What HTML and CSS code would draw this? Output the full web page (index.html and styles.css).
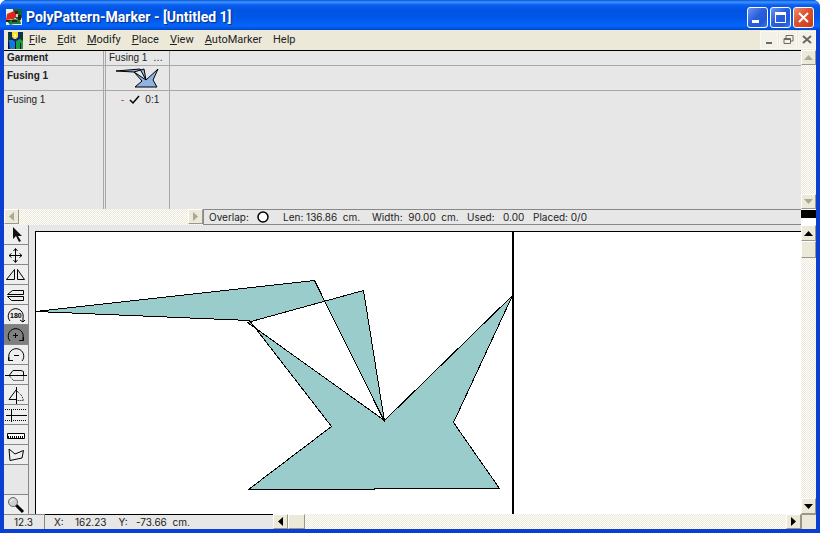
FILE: index.html
```html
<!DOCTYPE html>
<html lang="en">
<head>
<meta charset="utf-8">
<title>PolyPattern-Marker - [Untitled 1]</title>
<link rel="stylesheet" href="styles.css">
</head>
<body>
<div class="window">
  <header class="titlebar">
    <svg class="app-icon" width="16" height="16" viewBox="0 0 16 16" aria-hidden="true">
      <rect width="16" height="16" fill="#e8efe6"/>
      <path d="M7 0h9v9l-4 2-4-3z" fill="#16603a"/>
      <path d="M1 5l7-3 3 4-3 4-8 1z" fill="#e0261c"/>
      <path d="M9 2h3v3H9zM12 6h3v5h-3z" fill="#2c2018"/>
      <path d="M1 12l7-2 6 1 1 4H8l-4 1z" fill="#1d7a34"/>
      <path d="M0 11h5l-2 2H0zM6 11h5v2H6z" fill="#222"/>
      <path d="M10 5h2v3h-2z" fill="#f0c8a8"/>
    </svg>
    <h1 class="title">PolyPattern-Marker - [Untitled 1]</h1>
    <div class="caption-buttons">
      <button class="caption" aria-label="Minimize"><svg width="19" height="19"><path d="M4 12h7v3H4z" fill="#fff"/></svg></button>
      <button class="caption" aria-label="Maximize"><svg width="19" height="19"><path d="M4 4h11v11H4zM5 7v7h9V7z" fill="#fff" fill-rule="evenodd"/></svg></button>
      <button class="caption close" aria-label="Close"><svg width="19" height="19"><path d="M5 5l9 9M14 5l-9 9" stroke="#fff" stroke-width="2"/></svg></button>
    </div>
  </header>

  <div class="client">
    <nav class="menubar">
      <svg class="doc-icon" width="15" height="17" viewBox="0 0 15 17" aria-hidden="true">
        <rect width="15" height="17" fill="#10208c"/>
        <path d="M0 1h3v8H0zM12 1h3v7h-3z" fill="#123c20"/>
        <path d="M4 0h6v5L8 7H6L4 5z" fill="#f6e21c"/>
        <path d="M6 2h2v3H6z" fill="#fff6a0"/>
        <path d="M1 8h4l3 3v6H2z" fill="#1579d0"/>
        <path d="M8 9l4-2 3 2v8H8z" fill="#18a040"/>
        <path d="M0 10h1v7H0zM7 10h1v7H7zM12 11h1v6h-1z" fill="#061040"/>
      </svg>
      <a class="menu" href="#"><u>F</u>ile</a>
      <a class="menu" href="#"><u>E</u>dit</a>
      <a class="menu" href="#"><u>M</u>odify</a>
      <a class="menu" href="#"><u>P</u>lace</a>
      <a class="menu" href="#"><u>V</u>iew</a>
      <a class="menu" href="#"><u>A</u>utoMarker</a>
      <a class="menu" href="#">Help</a>
      <div class="doc-buttons">
        <button class="doc-button" aria-label="Minimize document"><svg width="16" height="16"><path d="M5 10h6v2H5z" fill="#6b6a62"/></svg></button>
        <button class="doc-button" aria-label="Restore document"><svg width="16" height="16"><path d="M6 6V3.500h7V9h-2M4 6.500h6.500v5H4zM4 7.500h6" fill="none" stroke="#6b6a62"/></svg></button>
        <button class="doc-button" aria-label="Close document"><svg width="16" height="16"><path d="M4 4l8 7M12 4l-8 7" stroke="#6b6a62" stroke-width="2"/></svg></button>
      </div>
    </nav>

    <section class="garments">
      <div class="garment-list">
        <table class="garment-table">
          <thead>
            <tr><th class="name">Garment</th><th class="gutter"></th><th class="piece light">Fusing 1 &nbsp;…</th><th class="rest"></th></tr>
          </thead>
          <tbody>
            <tr class="summary">
              <th class="name">Fusing 1</th><td class="gutter"></td>
              <td class="piece">
                <svg class="thumb" width="44" height="20" viewBox="0 0 44 20" aria-hidden="true">
                  <path d="M1 3L25 1L31 12L29 1L19 4L31 12L43 1L38 12L42 19H20L27 13L19 4Z" fill="#8fb4e3" fill-rule="evenodd" stroke="#000"/>
                </svg>
              </td><td class="rest"></td>
            </tr>
            <tr class="entry">
              <td class="name">Fusing 1</td><td class="gutter"></td>
              <td class="piece">
                <span class="count"><span class="dash">-</span><svg width="11" height="10" aria-hidden="true"><path d="M1 5l3 3L10 1" fill="none" stroke="#000" stroke-width="1.500"/></svg><span>0:1</span></span>
              </td><td class="rest"></td>
            </tr>
          </tbody>
        </table>
      </div>
      <div class="scroll vertical">
        <button class="arrow" aria-label="Scroll list up"><svg width="9" height="5"><path d="M0 5L4.500 0L9 5z"/></svg></button>
        <button class="arrow last" aria-label="Scroll list down"><svg width="9" height="5"><path d="M0 0L4.500 5L9 0z"/></svg></button>
      </div>
    </section>

    <div class="infobar">
      <div class="scroll horizontal">
        <button class="arrow" aria-label="Scroll list left"><svg width="5" height="9"><path d="M5 0L0 4.500L5 9z"/></svg></button>
        <button class="arrow last" aria-label="Scroll list right"><svg width="5" height="9"><path d="M0 0L5 4.500L0 9z"/></svg></button>
      </div>
      <div class="info">
        <span class="overlap">Overlap: <svg width="12" height="12" aria-hidden="true"><circle cx="6" cy="6" r="5" fill="#fff" stroke="#000" stroke-width="1.500"/></svg></span>
        <span class="len">Len: 136.86 &nbsp;cm.</span>
        <span class="wid">Width: &nbsp;90.00 &nbsp;cm.</span>
        <span class="used">Used: &nbsp; 0.00</span>
        <span>Placed: 0/0</span>
      </div>
      <div class="splitter"></div>
    </div>

    <main class="workspace">
      <div class="tools">
        <button class="tool" aria-label="Select"><svg width="22" height="18"><path d="M8 1v12l3-3 3 6 2-1-3-5h4z" fill="#111"/></svg></button>
        <button class="tool" aria-label="Move"><svg width="22" height="18"><path d="M10.500 3v13M4 9.500h13M8.500 5l2-2.500 2 2.500M8.500 14l2 2.500 2-2.500M6.500 7.500l-2.500 2 2.500 2M14.500 7.500l2.500 2-2.500 2" fill="none" stroke="#000"/></svg></button>
        <button class="tool" aria-label="Flip horizontally"><svg width="22" height="18"><path d="M9.500 3.500v10h-8zM12.500 3.500v10h7z" fill="none" stroke="#000"/></svg></button>
        <button class="tool" aria-label="Flip vertically"><svg width="22" height="18"><path d="M18.500 4.500h-11l-5 4h16zM18.500 10.500h-16l4 4h12z" fill="none" stroke="#000"/></svg></button>
        <button class="tool" aria-label="Rotate 180 degrees"><svg width="22" height="18"><path d="M5 15a7.500 7.500 0 1 1 13-3v4m-3-2l3 2 2-2" fill="none" stroke="#000"/><text class="tool-text" x="5" y="12">180</text></svg></button>
        <button class="tool active" aria-label="Rotate clockwise"><svg width="22" height="18"><path d="M5 15a7.500 7.500 0 1 1 13-3v3m-4-.500h4.500V11M8 9.500h5M10.500 7v5" fill="none" stroke="#000"/></svg></button>
        <button class="tool" aria-label="Rotate counterclockwise"><svg width="22" height="18"><path d="M17 15a7.500 7.500 0 1 0-13-3v3m4-.500H3.500V11M9 9.500h5" fill="none" stroke="#000"/></svg></button>
        <button class="tool" aria-label="Fold horizontally"><svg width="22" height="18"><path d="M0 9.500h22M4.500 9L8 4.500h8l2.500 1V9" fill="none" stroke="#000"/><path d="M4.500 10l4 4.500h10V9" fill="none" stroke="#000" stroke-dasharray="1 1"/></svg></button>
        <button class="tool" aria-label="Fold vertically"><svg width="22" height="18"><path d="M11.500 1v17M11 4l-7 9.500h7" fill="none" stroke="#000"/><path d="M12 5l5 5 1.500 4.500H12" fill="none" stroke="#000" stroke-dasharray="1 1"/></svg></button>
        <button class="tool" aria-label="Guides"><svg width="22" height="18"><path d="M6.500 3v13M1 9.500h21" fill="none" stroke="#000"/><path d="M0 3.500h22M0 14.500h22" stroke="#000" stroke-dasharray="1 1"/></svg></button>
        <button class="tool" aria-label="Measure"><svg width="22" height="18"><path d="M2.500 7.500h17v5h-17z" fill="#fff" stroke="#000"/><path d="M3 11.500h16" stroke="#000" stroke-width="3" stroke-dasharray="1 1"/></svg></button>
        <button class="tool" aria-label="Polygon"><svg width="22" height="18"><path d="M4 3l6 5 8.500-3.500L17 12 5 14.500z" fill="none" stroke="#000"/></svg></button>
        <button class="tool zoom" aria-label="Zoom"><svg width="22" height="18"><path d="M11 9l7 7" stroke="#000" stroke-width="3"/><circle cx="8" cy="6" r="4.500" fill="#d0d0d0" stroke="#666"/><path d="M5.500 6a3 3 0 0 1 3-2.500" fill="none" stroke="#fff"/></svg></button>
      </div>
      <div class="canvas">
        <svg class="marker" width="100%" height="100%" role="img" aria-label="Marker layout">
          <path class="fabric" d="M0 79.500L278.500 48.500L348.500 189.500L327.500 58.500L211.500 90.500L348.500 188.500L476.500 63.500L417.500 190.500L463.500 256.500L338.500 256.500V257.500L212.500 257.500L295.500 194.500L213.500 88.500Z"/>
          <rect x="476" y="0" width="2" height="100%"/>
        </svg>
      </div>
      <div class="scroll vertical enabled">
        <button class="arrow" aria-label="Scroll up"><svg width="9" height="5"><path d="M0 5L4.500 0L9 5z"/></svg></button>
        <div class="thumb-box"></div>
        <button class="arrow last" aria-label="Scroll down"><svg width="9" height="5"><path d="M0 0L4.500 5L9 0z"/></svg></button>
      </div>
    </main>

    <footer class="statusbar">
      <div class="scale">12.3</div>
      <div class="position"><span>X: &nbsp; &nbsp;162.23</span><span>Y: &nbsp; -73.66 &nbsp;cm.</span></div>
      <div class="scroll horizontal enabled">
        <button class="arrow" aria-label="Scroll left"><svg width="5" height="9"><path d="M5 0L0 4.500L5 9z"/></svg></button>
        <div class="thumb-box"></div>
        <button class="arrow last" aria-label="Scroll right"><svg width="5" height="9"><path d="M0 0L5 4.500L0 9z"/></svg></button>
      </div>
      <div class="corner"></div>
    </footer>
  </div>
</div>
</body>
</html>
```

FILE: styles.css
```css
* {
  box-sizing: border-box;
}

body {
  margin: 0;
  background: #fff;
  color: #222;
  font: 10px/14px "Liberation Sans", Arial, sans-serif;
}

button {
  margin: 0;
  padding: 0;
  border: 0;
  font: inherit;
}

svg {
  display: block;
}

.window {
  display: flex;
  flex-direction: column;
  height: 100vh;
  padding: 0 4px 4px;
  border-radius: 7px 7px 0 0;
  background: #0a3fd2;
  overflow: hidden;
}

/* Title bar */
.titlebar {
  display: flex;
  align-items: center;
  height: 30px;
  margin: 0 -4px;
  padding: 4px 6px 0;
  background: linear-gradient(#0a50d8 0, #3d95ff 2px, #0a5ff0 5px, #0054e3 10px, #0057e8 18px, #0566fb 26px, #0047cc 30px);
}

.title {
  flex: 1;
  margin: 0 0 0 4px;
  color: #fff;
  font: bold 14px/20px Roboto, sans-serif;
  text-shadow: 1px 1px 1px #0a2c8c;
}

.caption-buttons {
  display: flex;
  gap: 2px;
}

.caption {
  width: 21px;
  height: 21px;
  border: 1px solid #fff;
  border-radius: 3px;
  background: linear-gradient(135deg, #6c96f2, #2a5fdc 45%, #2158d8 75%, #3b7bf0);
}

.close {
  background: linear-gradient(135deg, #ee8d70, #dc5130 45%, #cc3c14);
}

.client {
  display: flex;
  flex: 1;
  flex-direction: column;
  min-height: 0;
  background: #e7e7e7;
}

/* Menu */
.menubar {
  display: flex;
  flex: none;
  align-items: center;
  height: 20px;
  padding-left: 4px;
  background: #ece9d8;
  font: 11px/18px Roboto, sans-serif;
}

.doc-icon {
  margin-right: 6px;
}

.menu {
  margin-right: 11px;
  color: #222;
  text-decoration: none;
}

.doc-buttons {
  display: flex;
  gap: 3px;
  margin-left: auto;
  padding-right: 1px;
}

.doc-button {
  width: 16px;
  height: 16px;
  background: #f3f1e8;
  box-shadow: 0 0 0 1px #f9f8f2;
}

/* Garment list */
.garments {
  display: flex;
  flex: none;
  height: 159px;
}

.garment-list {
  flex: 1;
  border-top: 1px solid #000;
}

.garment-table {
  width: 100%;
  height: 100%;
  border-collapse: separate;
  border-spacing: 0;
  table-layout: fixed;
}

.garment-table th,
.garment-table td {
  padding: 0;
  border-bottom: 1px solid #a8a8a8;
  text-align: left;
  vertical-align: top;
}

.garment-table thead th {
  height: 15px;
}

.garment-table .summary > * {
  height: 25px;
}

.garment-table .entry > * {
  border-bottom: 0;
}

.garment-table .name {
  width: 100px;
  padding-left: 3px;
  border-right: 1px solid #a8a8a8;
}

.garment-table .summary .name {
  padding-top: 3px;
}

.garment-table .entry > * {
  padding-top: 2px;
}

.garment-table .gutter {
  width: 2px;
  border-right: 1px solid #a8a8a8;
}

.garment-table .piece {
  width: 64px;
  padding-left: 3px;
  border-right: 1px solid #a8a8a8;
  white-space: nowrap;
}

.light {
  font-weight: normal;
}

.thumb {
  margin: 2px 0 0 6px;
}

.count {
  display: flex;
  gap: 5px;
  align-items: center;
  padding-left: 12px;
}

.dash {
  color: #d03040;
}

/* Scroll bars */
.scroll {
  display: flex;
  background: repeating-conic-gradient(#fff 0 25%, #ece9d8 0 50%) 0 0 / 2px 2px;
}

.vertical {
  flex: none;
  flex-direction: column;
  width: 15px;
}

.arrow,
.thumb-box {
  display: grid;
  flex: none;
  place-items: center;
  width: 15px;
  height: 15px;
  border: 1px solid;
  border-color: #fff #99978a #99978a #fff;
  background: #ece9d8;
  fill: #aaa899;
}

.enabled .arrow {
  fill: #000;
}

.enabled .thumb-box {
  width: 17px;
}

.vertical.enabled .arrow {
  height: 16px;
}

.vertical.enabled .thumb-box {
  width: 15px;
  height: 17px;
}

.vertical .last {
  margin-top: auto;
}

.horizontal .last {
  margin-left: auto;
}

/* Information strip */
.infobar {
  display: flex;
  flex: none;
  height: 16px;
}

.infobar .scroll {
  width: 199px;
}

.info,
.statusbar {
  font-family: Inter, "Liberation Sans", sans-serif;
}

.info {
  display: flex;
  flex: 1;
  align-items: center;
  padding-left: 5px;
  border: 1px solid #888;
  border-right: 0;
  white-space: nowrap;
}

.overlap {
  display: flex;
  gap: 8px;
  align-items: center;
  width: 74px;
}

.len {
  width: 89px;
}

.wid {
  width: 95px;
}

.used {
  width: 66px;
}

.splitter {
  width: 15px;
  margin-bottom: 7px;
  border-top: 1px solid #fff;
  background: #000;
  box-shadow: 0 7px #fff;
}

/* Work area */
.workspace {
  display: flex;
  flex: 1;
  min-height: 0;
}

.tools {
  display: flex;
  flex: none;
  flex-direction: column;
  width: 25px;
  border-right: 1px solid #888;
}

.tool {
  flex: none;
  width: 24px;
  height: 20px;
  padding-left: 1px;
  border-bottom: 1px solid #888;
  background: #eee;
}

.tool.active {
  background: #808080;
}

.tool.zoom {
  height: 20px;
  margin-top: auto;
  border-top: 1px solid #888;
  border-bottom: 0;
}

.tool-text {
  font: bold 7px "Liberation Sans", Arial, sans-serif;
}

.canvas {
  flex: 1;
  margin: 6px 0 0 6px;
  border: 1px solid #000;
  border-width: 1px 0 0 1px;
  background: #fff;
  overflow: hidden;
}

.fabric {
  fill: #9acccb;
  fill-rule: evenodd;
  stroke: #000;
  shape-rendering: crispEdges;
}

/* Status bar */
.statusbar {
  display: flex;
  flex: none;
  height: 15px;
}

.scale {
  width: 41px;
  padding-left: 10px;
  border-top: 1px solid #888;
  border-right: 1px solid #888;
}

.position {
  display: flex;
  gap: 12px;
  width: 228px;
  padding-left: 9px;
  border-top: 1px solid #000;
  white-space: nowrap;
}

.statusbar .scroll {
  flex: 1;
}

.corner {
  width: 15px;
  border: 1px solid #99978a;
  border-width: 1px 0 0 1px;
  background: #ece9d8;
}
```
